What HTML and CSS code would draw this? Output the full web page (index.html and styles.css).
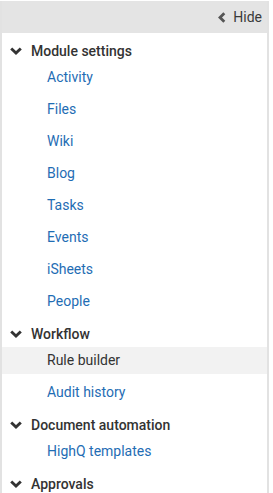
FILE: index.html
```html
<!DOCTYPE html>
<html>
<head>
<meta charset="utf-8">
<link rel="stylesheet" href="styles.css">
</head>
<body>
<div class="panel">
  <div class="bar">
    <svg class="chev-left" width="8" height="11" viewBox="0 0 8 11"><polyline points="6.3,1.2 2,5.5 6.3,9.8" fill="none" stroke="#555" stroke-width="2.8"/></svg>
    <span class="hide">Hide</span>
  </div>
  <div class="content">
    <div class="section">
      <div class="sec-head"><svg class="chev-down" width="12" height="8" viewBox="0 0 12 8"><polyline points="1.2,1.5 6,6 10.8,1.5" fill="none" stroke="#333" stroke-width="2.9"/></svg><span>Module settings</span></div>
      <div class="item">Activity</div>
      <div class="item">Files</div>
      <div class="item">Wiki</div>
      <div class="item">Blog</div>
      <div class="item">Tasks</div>
      <div class="item">Events</div>
      <div class="item">iSheets</div>
      <div class="item">People</div>
    </div>
    <div class="section">
      <div class="sec-head"><svg class="chev-down" width="12" height="8" viewBox="0 0 12 8"><polyline points="1.2,1.5 6,6 10.8,1.5" fill="none" stroke="#333" stroke-width="2.9"/></svg><span>Workflow</span></div>
      <div class="item active">Rule builder</div>
      <div class="item">Audit history</div>
    </div>
    <div class="section">
      <div class="sec-head"><svg class="chev-down" width="12" height="8" viewBox="0 0 12 8"><polyline points="1.2,1.5 6,6 10.8,1.5" fill="none" stroke="#333" stroke-width="2.9"/></svg><span>Document automation</span></div>
      <div class="item">HighQ templates</div>
    </div>
    <div class="section">
      <div class="sec-head"><svg class="chev-down" width="12" height="8" viewBox="0 0 12 8"><polyline points="1.2,1.5 6,6 10.8,1.5" fill="none" stroke="#333" stroke-width="2.9"/></svg><span>Approvals</span></div>
    </div>
  </div>
</div>
</body>
</html>
```
FILE: styles.css
```css
html, body {
  margin: 0;
  padding: 0;
  background: #fff;
}
body {
  font-family: Roboto, "Liberation Sans", sans-serif;
  font-size: 14px;
  overflow: hidden;
  height: 493px;
}
.panel {
  width: 269px;
  box-sizing: border-box;
  margin-top: 1px;
  border-left: 2px solid #e2e2e2;
  border-right: 2px solid #e2e2e2;
  height: 492px;
  overflow: hidden;
}
.bar {
  margin: 0 -2px;
  height: 32px;
  background: #e4e4e4;
  display: flex;
  justify-content: flex-end;
  align-items: center;
  padding-right: 7px;
  color: #3a3a3a;
}
.chev-left {
  display: block;
  margin-right: 7px;
}
.hide {
  line-height: 32px;
}
.content {
  padding-top: 4px;
}
.sec-head {
  height: 27px;
  display: flex;
  align-items: center;
  padding-left: 8px;
  font-weight: 500;
  color: #333;
}
.chev-down {
  display: block;
  margin-right: 9px;
}
.item {
  height: 27px;
  line-height: 27px;
  padding-left: 45px;
  margin-bottom: 5px;
  color: #1f6db4;
}
.item.active {
  background: #f2f2f2;
  color: #333;
}
```
